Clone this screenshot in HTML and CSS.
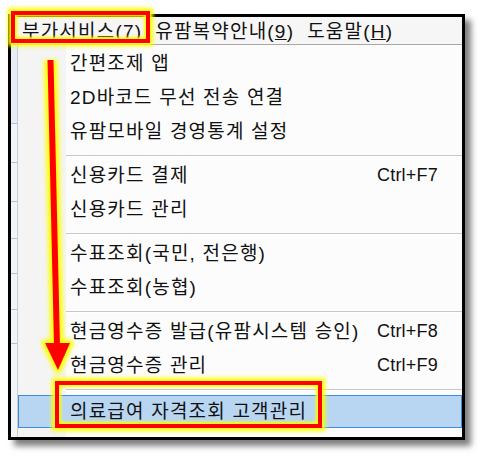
FILE: index.html
```html
<!DOCTYPE html>
<html lang="ko">
<head>
  <meta charset="UTF-8" />
  <title>부가서비스 메뉴</title>
  <link rel="stylesheet" href="styles.css">
</head>
<body>
  <div class="screen">
    <div class="frame">
      <div class="menubar">
        <span class="top-item">부가서비스(<u>7</u>)</span>
        <span class="top-item">유팜복약안내(<u>9</u>)</span>
        <span class="top-item">도움말(<u>H</u>)</span>
      </div>

      <div class="body">
        <!-- window behind the menu -->
        <div class="behind">
          <div class="cell c1"></div>
          <div class="cell c2"></div>
          <div class="cell c3"></div>
          <div class="cell c4"></div>
          <div class="cell c5"></div>
          <div class="cell c6"></div>
          <div class="cell c7"></div>
        </div>

        <div class="menu">
          <div class="item"><span class="label">간편조제 앱</span></div>
          <div class="item"><span class="label">2D바코드 무선 전송 연결</span></div>
          <div class="item"><span class="label">유팜모바일 경영통계 설정</span></div>
          <div class="sep"></div>
          <div class="item"><span class="label">신용카드 결제</span><span class="key">Ctrl+F7</span></div>
          <div class="item"><span class="label">신용카드 관리</span></div>
          <div class="sep"></div>
          <div class="item"><span class="label">수표조회(국민, 전은행)</span></div>
          <div class="item"><span class="label">수표조회(농협)</span></div>
          <div class="sep"></div>
          <div class="item"><span class="label">현금영수증 발급(유팜시스템 승인)</span><span class="key">Ctrl+F8</span></div>
          <div class="item"><span class="label">현금영수증 관리</span><span class="key">Ctrl+F9</span></div>
          <div class="sep"></div>
          <div class="item active"><span class="label">의료급여 자격조회 고객관리</span></div>
        </div>
      </div>
    </div>

    <!-- annotations -->
    <div class="mark mark-top"></div>
    <div class="mark mark-bottom"></div>
    <svg class="arrow" width="482" height="456" viewBox="0 0 482 456">
      <defs>
        <filter id="glow" x="-50%" y="-10%" width="200%" height="120%">
          <feGaussianBlur stdDeviation="2" />
        </filter>
      </defs>
      <g filter="url(#glow)">
        <line x1="50.5" y1="60" x2="57" y2="345" stroke="#ffff00" stroke-width="13" />
        <polygon points="45,343 70,343 58,370" fill="#ffff00" stroke="#ffff00" stroke-width="7" stroke-linejoin="round" />
      </g>
      <line x1="50.5" y1="60" x2="57" y2="346" stroke="#ff0000" stroke-width="6" />
      <polygon points="45,343 70,343 58,370" fill="#ff0000" />
    </svg>
  </div>
</body>
</html>
```

FILE: styles.css
```css
body {
  margin: 0;
  background: #fff;
  font-family: "Liberation Sans", "Noto Sans CJK KR", sans-serif;
  font-size: 19px;
  letter-spacing: 1.2px;
  color: #111;
}

.screen {
  position: relative;
  width: 482px;
  height: 456px;
  overflow: hidden;
}

.frame {
  margin: 14px 0 0 8px;
  width: 451px;
  height: 420px;
  border: 3px solid #000;
  box-shadow: 6px 6px 6px rgba(0,0,0,0.5);
  display: flex;
  flex-direction: column;
  background: #fcfcfc;
}

.menubar {
  height: 25px;
  border-bottom: 1px solid #a8a8a8;
  background: #f6f6f6;
  display: flex;
  align-items: center;
  gap: 13px;
  padding-left: 11px;
  padding-top: 2px;
  line-height: 1;
}

.body {
  flex: 1;
  display: flex;
}

.behind {
  width: 6px;
  border-right: 1px solid #c5ccd3;
  background: #f2f5f8;
}

.cell {
  border-bottom: 1px solid #b8c0c8;
}

.c1 { height: 78px; background: #e7edf4; }
.c2 { height: 38px; }
.c3 { height: 38px; }
.c4 { height: 36px; }
.c5 { height: 34px; }
.c6 { height: 35px; }
.c7 { height: 33px; }

.menu {
  flex: 1;
  padding-top: 1px;
  background: linear-gradient(to right, #f4f4f4 48px, #fcfcfc 48px);
}

.item {
  height: 34px;
  display: flex;
  align-items: center;
  line-height: 1;
  white-space: nowrap;
}

.label {
  margin-left: 52px;
  width: 307px;
}

.key {
  letter-spacing: 0.2px;
  font-size: 18px;
}

.sep {
  height: 10px;
  padding-top: 7px;
  box-sizing: border-box;
}

.sep::after {
  content: "";
  display: block;
  margin-left: 48px;
  border-top: 1px solid #c8c8c8;
  border-bottom: 1px solid #fff;
}

.item.active {
  margin-top: 3px;
  height: 33px;
  box-sizing: border-box;
  border: 1px solid #3c8de0;
  background: #b8d6f1;
}

.item.active .label {
  margin-left: 51px;
}

.mark {
  position: absolute;
  box-sizing: border-box;
  border: 4px solid #ff0000;
  box-shadow: 0 0 4px 3px #ffff00, inset 0 0 3px 2px #ffff00;
}

.mark-top {
  left: 11px;
  top: 11px;
  width: 139px;
  height: 32px;
}

.mark-bottom {
  left: 55px;
  top: 381px;
  width: 267px;
  height: 47px;
}

.arrow {
  position: absolute;
  left: 0;
  top: 0;
  pointer-events: none;
}
```
